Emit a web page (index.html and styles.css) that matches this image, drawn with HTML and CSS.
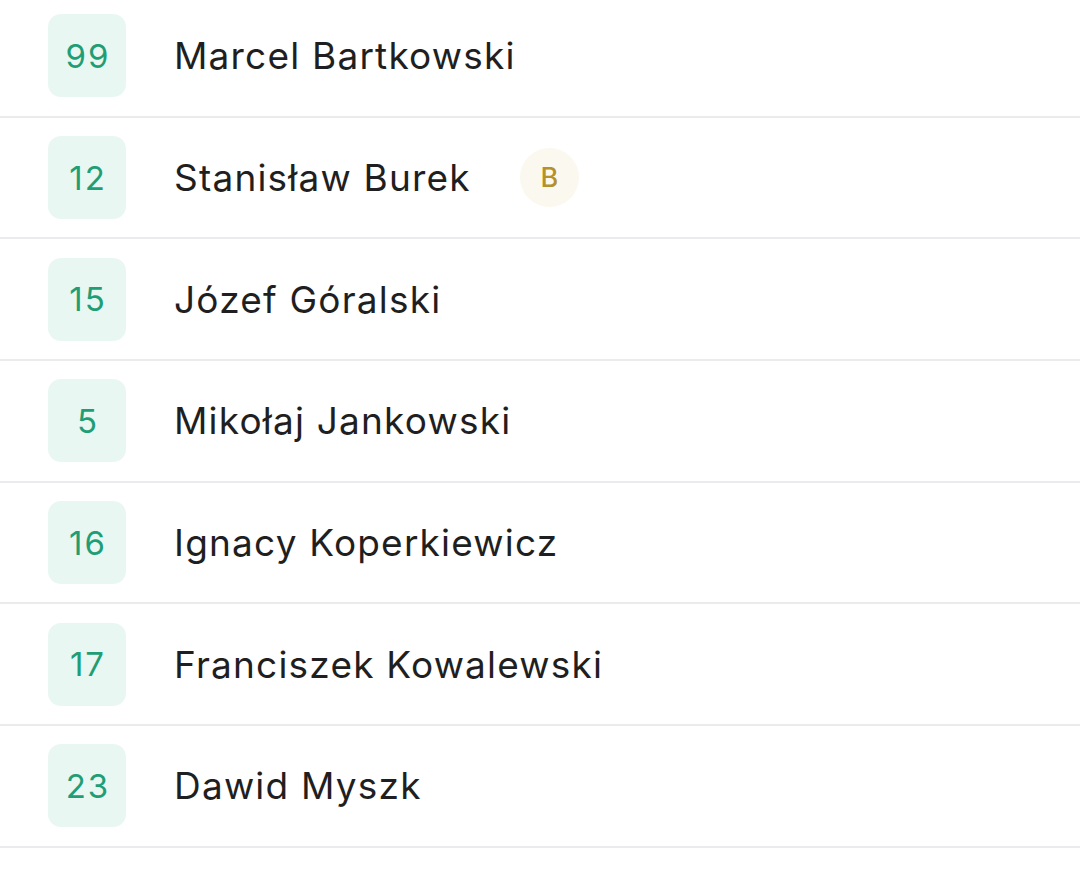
FILE: index.html
```html
<!DOCTYPE html>
<html lang="pl">
<head>
<meta charset="utf-8">
<link rel="stylesheet" href="styles.css">
</head>
<body>
<ul class="roster">
  <li class="row"><span class="num">99</span><span class="name">Marcel Bartkowski</span></li>
  <li class="row"><span class="num">12</span><span class="name">Stanisław Burek</span><span class="tag">B</span></li>
  <li class="row"><span class="num">15</span><span class="name">Józef Góralski</span></li>
  <li class="row"><span class="num">5</span><span class="name">Mikołaj Jankowski</span></li>
  <li class="row"><span class="num">16</span><span class="name">Ignacy Koperkiewicz</span></li>
  <li class="row"><span class="num">17</span><span class="name">Franciszek Kowalewski</span></li>
  <li class="row"><span class="num">23</span><span class="name">Dawid Myszk</span></li>
</ul>
</body>
</html>
```
FILE: styles.css
```css
html, body {
  margin: 0;
  padding: 0;
  background: #ffffff;
  font-family: Inter, "Noto Sans", sans-serif;
  overflow: hidden;
}
.roster {
  list-style: none;
  margin: -4px 0 0 0;
  padding: 0;
}
.row {
  box-sizing: border-box;
  height: 121.7px;
  display: flex;
  align-items: center;
  padding-left: 48px;
  border-bottom: 2px solid #ebebed;
}
.num {
  box-sizing: border-box;
  width: 78px;
  height: 83px;
  padding-left: 2px;
  border-radius: 13px;
  background: #e9f7f2;
  color: #1f9e76;
  font-size: 33px;
  letter-spacing: 2px;
  display: flex;
  align-items: center;
  justify-content: center;
}
.name {
  margin-left: 48px;
  font-size: 37px;
  color: #1f1f22;
  letter-spacing: 1.2px;
}
.tag {
  margin-left: 49px;
  width: 59px;
  height: 59px;
  border-radius: 50%;
  background: #fbf8ef;
  color: #b4912c;
  font-size: 27px;
  font-weight: 500;
  display: flex;
  align-items: center;
  justify-content: center;
}
```
